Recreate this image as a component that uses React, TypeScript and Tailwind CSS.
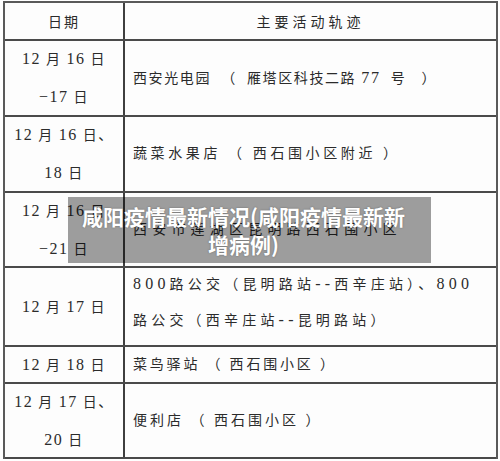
import React from 'react';

type Row = {
  h: string;
  date: string[];
  lines: string[];
  track: string;
  lead?: string;
  pad?: string;
};

const rows: Row[] = [
  {
    h: 'h-[76px]',
    date: ['12 月 16 日', '−17 日'],
    lines: ['西安光电园\u00a0 （\u00a0 雁塔区科技二路 77\u00a0 号\u00a0\u00a0 ）'],
    track: 'tracking-[1.6px]',
  },
  {
    h: 'h-[76px]',
    date: ['12 月 16 日、', '18 日'],
    lines: ['蔬菜水果店 （ 西石围小区附近 ）'],
    track: 'tracking-[3.6px]',
  },
  {
    h: 'h-[75px]',
    date: ['12 月 16 日', '−21 日'],
    lines: ['西安市莲湖区昆明路西石围小区'],
    track: 'tracking-[5.2px]',
  },
  {
    h: 'h-[79px]',
    date: ['12 月 17 日'],
    lines: ['800路公交（昆明路站--西辛庄站）、800', '路公交（西辛庄站--昆明路站）'],
    track: 'tracking-[4.2px]',
    lead: 'leading-[35px]',
    pad: 'pb-[10px]',
  },
  {
    h: 'h-[37px]',
    date: ['12 月 18 日'],
    lines: ['菜鸟驿站 （ 西石围小区 ）'],
    track: 'tracking-[2.8px]',
  },
  {
    h: 'h-[75px]',
    date: ['12 月 17 日、', '20 日'],
    lines: ['便利店 （ 西石围小区 ）'],
    track: 'tracking-[3px]',
  },
];

// digits and dashes use the bigger serif size, as in the scanned table
function Txt({ s }: { s: string }) {
  const parts = s.split(/([0-9−\-]+)/);
  return (
    <>
      {parts.map((p, i) =>
        /[0-9−\-]/.test(p) ? (
          <span key={i} className="text-[16px]">
            {p}
          </span>
        ) : (
          <span key={i}>{p}</span>
        )
      )}
    </>
  );
}

export default function App() {
  return (
    <div className="relative h-[461px] w-[500px] bg-white pt-[1px] font-['Liberation_Serif','Noto_Sans_CJK_SC',serif] text-[14px] text-[#2b2b2b]">
      <div className="ml-[3px] w-[495px] border-x-2 border-t-2 border-[#5a5a5a] bg-[#fdfdfd]">
        {/* header */}
        <div className="flex h-[38px] border-b-2 border-[#4a4a4a]">
          <div className="flex w-[120px] shrink-0 items-center justify-center border-r-2 border-[#3f3f3f] pt-[3px] tracking-[2px]">
            日期
          </div>
          <div className="flex flex-1 items-center justify-center pt-[3px] tracking-[4px]">
            主要活动轨迹
          </div>
        </div>

        {rows.map((r, i) => (
          <div key={i} className={`flex ${r.h} border-b-2 border-[#4a4a4a]`}>
            <div className="flex w-[120px] shrink-0 flex-col items-center justify-center border-r-2 border-[#3f3f3f] leading-[37px] tracking-[1.5px] whitespace-nowrap">
              {r.date.map((d, j) => (
                <div key={j}>
                  <Txt s={d} />
                </div>
              ))}
            </div>
            <div
              className={`flex flex-1 flex-col justify-center pl-[8px] whitespace-nowrap ${r.track} ${r.lead ?? 'leading-[24px]'} ${r.pad ?? ''}`}
            >
              {r.lines.map((l, j) => (
                <div key={j}>
                  <Txt s={l} />
                </div>
              ))}
            </div>
          </div>
        ))}
      </div>

      {/* caption overlay */}
      <div className="absolute left-[68px] top-[197px] h-[66px] w-[363px] bg-black/[0.38] pl-[4px] pr-[16px] py-[5px] text-center font-['Noto_Sans_CJK_SC',sans-serif] text-[21px] font-bold leading-[28px] text-white [text-shadow:0_0_2px_rgba(0,0,0,0.35)]">
        咸阳疫情最新情况(咸阳疫情最新新增病例)
      </div>
    </div>
  );
}
